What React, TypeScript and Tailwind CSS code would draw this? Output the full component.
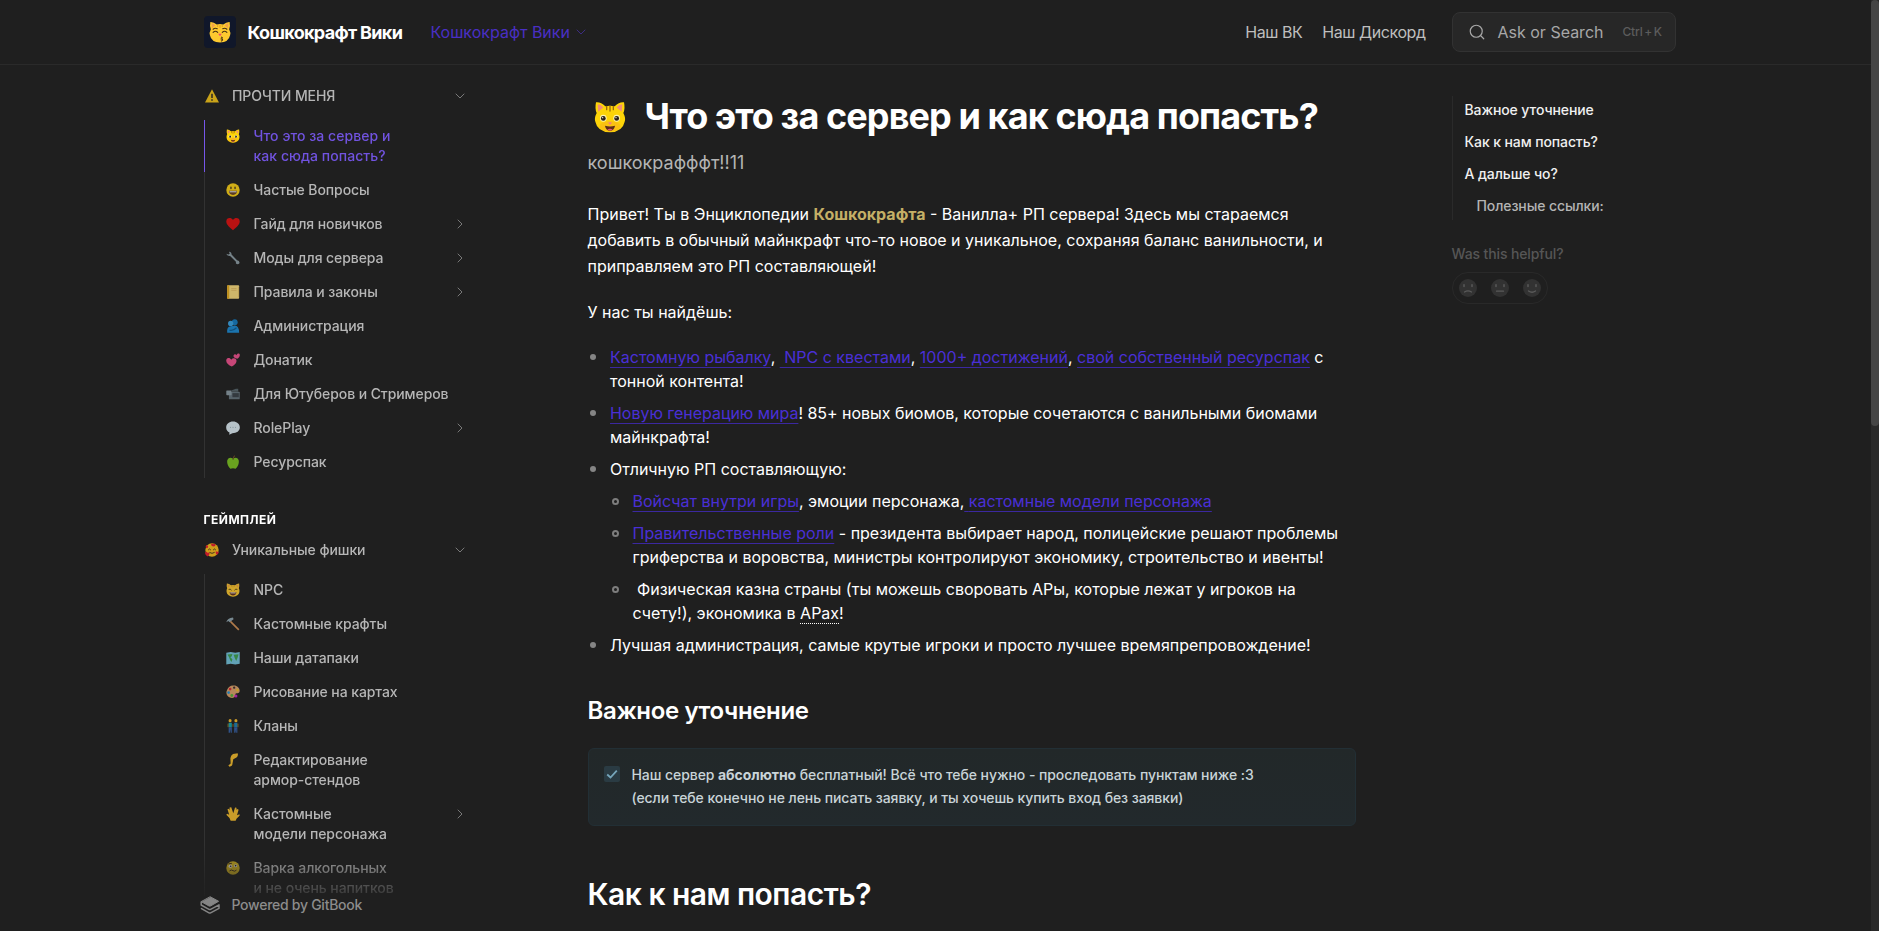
import React from "react";
import { ChevronDown, ChevronRight, Search } from "lucide-react";

type Glyph = React.ReactNode;

const catHead = (
  <>
    <path d="M1.500 1 Q5 0.800 8.500 3.800 Q12 3 15.500 3.800 Q19 0.800 22.500 1 Q23.500 6 22 9 Q24 13 23 15.500 Q21.500 23 12 23.500 Q2.500 23 1 15.500 Q0 13 2 9 Q0.500 6 1.500 1Z" fill="#fdc92f" />
    <path d="M2.800 2.500 Q5 2.500 7 4.800 L3.200 8Z M21.200 2.500 Q19 2.500 17 4.800 L20.800 8Z" fill="#f0a24a" />
    <path d="M12 4V7.500 M9.500 4.500V6.500 M14.500 4.500V6.500" stroke="#d99a1c" strokeWidth="1" />
  </>
);

const face = (color: string) => <circle cx="12" cy="12" r="11.500" fill={color} />;

const glyphs: Record<string, Glyph> = {
  warning: (
    <>
      <path d="M12 0.500 L24 23 H0Z" fill="#f5c518" />
      <path d="M12 8v7.500 M12 17.500v2.500" stroke="#2a2a2a" strokeWidth="2.600" />
    </>
  ),
  cat: (
    <>
      <path d="M1.500 1 Q5 0.500 8.500 4 Q12 3 15.500 4 Q19 0.500 22.500 1 Q23.500 6 22 9 Q24 13 23 15.500 Q21.500 23 12 23.500 Q2.500 23 1 15.500 Q0 13 2 9 Q0.500 6 1.500 1Z" fill="#fdd408" />
      <path d="M2.800 2.500 Q5 2.500 7 4.800 L3.200 8Z M21.200 2.500 Q19 2.500 17 4.800 L20.800 8Z" fill="#ef8d78" />
      <path d="M12 3.800V7.500 M9.500 4V6.500 M14.500 4V6.500" stroke="#9b6a10" strokeWidth="1" strokeLinecap="round" />
      <ellipse cx="12" cy="19" rx="8" ry="4" fill="#f5a623" opacity="0.400" />
      <ellipse cx="7" cy="13" rx="2.500" ry="2.600" fill="#fff6b0" />
      <ellipse cx="17" cy="13" rx="2.500" ry="2.600" fill="#fff6b0" />
      <circle cx="7" cy="13.100" r="1.800" fill="#2b2118" />
      <circle cx="17" cy="13.100" r="1.800" fill="#2b2118" />
      <circle cx="6.500" cy="12.500" r="0.500" fill="#fff" />
      <circle cx="16.500" cy="12.500" r="0.500" fill="#fff" />
      <path d="M10.500 16.200h3l-1.500 1.600z" fill="#f0709a" />
      <path d="M8.200 18.600 Q12 19.600 15.800 18.600 Q15 22.300 12 22.300 Q9 22.300 8.200 18.600Z" fill="#5d2c18" />
      <path d="M10 21.400 Q12 20.300 14 21.400 Q12 22.800 10 21.400Z" fill="#e8557a" />
    </>
  ),
  kiss: (
    <>
      {catHead}
      <path d="M4.500 9 Q6.500 7 9 8.500 M15 8.500 Q17.500 7 19.500 9 M4.500 12.500 Q7 9.800 9.500 12.500 M14.500 12.500 Q17 9.800 19.500 12.500" stroke="#4a3413" strokeWidth="1.200" fill="none" strokeLinecap="round" />
      <path d="M10 14h4l-2 2.600z" fill="#ef4b6c" />
      <path d="M13 17.500 q3 0.800 0.500 2 q3 0.800 -0.500 2.500" stroke="#4a3413" strokeWidth="1.200" fill="none" />
    </>
  ),
  grin: (
    <>
      {face("#fcd116")}
      <path d="M8.500 7v2.500 M15.500 7v2.500" stroke="#3b2b20" strokeWidth="2.200" strokeLinecap="round" />
      <path d="M5 13.500 H19 Q19 20.500 12 20.500 Q5 20.500 5 13.500Z" fill="#6b4326" />
      <path d="M6 14h12v2h-12z" fill="#d8d8d8" />
    </>
  ),
  heart: (
    <path d="M12 22.500 C7 18 0.500 13.500 0.500 7.500 C0.500 1 8.500 0 12 5 C15.500 0 23.500 1 23.500 7.500 C23.500 13.500 17 18 12 22.500Z" fill="#e00f0f" />
  ),
  wrench: (
    <path d="M0.500 4.500 L4 6 L6.500 4.500 L5 1.200 Q9.500 1 9.500 6 L19 16 Q24 16.500 23 21 Q20.500 24.500 17 21.500 L17 18.500 L7 8.500 Q2 9 0.500 4.500Z" fill="#8b9ba3" />
  ),
  ledger: (
    <>
      <rect x="2" y="0.500" width="20.500" height="23" rx="1.500" fill="#fbdc7e" />
      <rect x="2" y="0.500" width="3.500" height="23" fill="#e8ac1a" />
      <path d="M9 6h9 M9 9h9 M21.500 3v18" stroke="#dcb55a" strokeWidth="1.200" />
    </>
  ),
  hug: (
    <>
      <circle cx="15" cy="5.500" r="5" fill="#137bc0" />
      <circle cx="8" cy="7.500" r="4.500" fill="#3aa3e3" />
      <path d="M2 23.500 Q1 13 8 12.500 L15 11 Q22.500 11.500 22.500 23.500Z" fill="#1b8ad3" />
      <path d="M6 19 Q12 21 18 15" stroke="#0e5e96" strokeWidth="2" fill="none" />
    </>
  ),
  hearts: (
    <>
      <path d="M10 23 C4 21 -0.500 17 0.500 12 C1.500 7.500 7 7.500 9 11.500 C12 7.500 18.500 8.500 18 14 C17.500 18 14 21 10 23Z" fill="#f0508e" />
      <path d="M19.500 10 C15 9 12 7 13 4 C14 1.500 17 1.500 18 4 C19 0.500 23 0 23.700 3 C24 6 22 8.500 19.500 10Z" fill="#f0508e" />
    </>
  ),
  camera: (
    <>
      <rect x="5" y="8" width="18.500" height="13" rx="1" fill="#66757e" />
      <rect x="11" y="10.500" width="11" height="7" fill="#3a4248" />
      <rect x="0.500" y="6" width="9" height="8" rx="1" fill="#8a9aa3" />
      <path d="M9 6 L17 3 H21 V8H9Z" fill="#56636a" />
    </>
  ),
  speech: (
    <>
      <path d="M12 1 C18.500 1 23.700 5.500 23.700 11 C23.700 17 18 20.800 11 20.800 L5.500 23.700 L6 19.500 C2.500 18 0.300 15 0.300 11 C0.300 5.500 5.500 1 12 1Z" fill="#dcebf3" />
      <path d="M7 11h1.500 M11.300 11h1.500 M15.500 11h1.500" stroke="#8fa3ad" strokeWidth="1.500" />
    </>
  ),
  apple: (
    <>
      <path d="M12 6 Q20 2.500 22 10 Q22.500 18 16.500 23.500 Q12 22.300 7.500 23.500 Q1.500 18 2 10 Q4 2.500 12 6Z" fill="#7cc520" />
      <path d="M12 8 Q12 4 15 1" stroke="#704b25" strokeWidth="2" fill="none" />
    </>
  ),
  love: (
    <>
      {face("#fcbf1b")}
      <path d="M5.500 12 Q7.500 8.500 10 12 M14 12 Q16.500 8.500 18.500 12 M7.500 16 Q12 19.500 16.500 16" stroke="#423020" strokeWidth="1.600" fill="none" />
      <path d="M15 6 Q9 5 11 1 Q13 0 14 2 Q17 0 18 3 Q18 5.500 15 6Z M4.500 23 Q-1 20 0.500 16 Q3 14 4.500 17 Q7.500 15 8 18 Q7.500 21 4.500 23Z M20.500 20 Q17.500 18 18.500 14.500 Q20 13.500 20.500 15.500 Q23 13 23.500 16 Q23 19 20.500 20Z M3 9 Q0 7 2 4 Q5 4 5.500 6 Q5 8.500 3 9Z" fill="#ed1c2e" />
    </>
  ),
  catGrin: (
    <>
      {catHead}
      <path d="M4.500 11 Q7.500 9.500 9.500 12.500 M14.500 12.500 Q16.500 9.500 19.500 11" stroke="#4a3413" strokeWidth="1.500" fill="none" />
      <path d="M6 16 H18 Q17 21.500 12 21.500 Q7 21.500 6 16Z" fill="#65331c" />
      <path d="M7.500 16.300h9v1.400h-9z" fill="#fff" />
    </>
  ),
  pick: (
    <>
      <path d="M8 6 L23 21 L21 23 L6.500 8.500Z" fill="#d39055" />
      <path d="M0.500 9 Q2 2 12 0.800 L13 3.800 L6 9 L4 7Z" fill="#8fa4ae" />
    </>
  ),
  map: (
    <>
      <path d="M0.500 3 L8 1.500 L16 3 L23.500 1.500 V22 L16 23 L8 22 L0.500 23Z" fill="#74c4dc" />
      <path d="M2.500 6 L11 5 L10 9 L7.500 10.500 L11 14 L9.500 19 L7 15.500 L5.500 11Z M13 6.500 L21.500 5.500 L20 11 L17.500 17 L15 12Z" fill="#3da24f" />
    </>
  ),
  palette: (
    <>
      <path d="M12 1 C20 0 25 7 23 12 C21 16 16 12 16 17 C16 21 12 23 8 22 C1 20 -1 13 2 8 C4 4 7 1 12 1Z" fill="#dba269" />
      <circle cx="7" cy="7" r="2.300" fill="#dd2935" />
      <circle cx="14" cy="4.500" r="2" fill="#3c2c2c" />
      <circle cx="4.500" cy="13" r="2.300" fill="#2195df" />
      <circle cx="10" cy="18" r="2.400" fill="#57b53d" />
      <circle cx="19.500" cy="9" r="2" fill="#f3c21b" />
      <circle cx="17" cy="19" r="2.600" fill="#c41ec4" />
    </>
  ),
  people: (
    <>
      <circle cx="7" cy="2.800" r="2.600" fill="#f5b92b" />
      <circle cx="17" cy="2.800" r="2.600" fill="#f5b92b" />
      <path d="M4.500 6.500h5.500v7.500H4.500z" fill="#16a5ab" />
      <path d="M14 6.500h5.500v7.500H14z" fill="#1c7fb2" />
      <path d="M4.500 14h5.500v9.500H8v-7l-1.300 7H4.500z M14 14h5.500v9.500h-2v-7l-1.300 7H14z" fill="#355fa3" />
      <path d="M3.500 8v6 M12 8.500v5 M20.500 8v6" stroke="#e2a325" strokeWidth="1" />
    </>
  ),
  leg: (
    <path d="M12 1.500 L20 0.500 Q21.500 5 18 7.500 L12.500 10.500 L11 19 Q11 23 6 23.500 L4 21.500 L8 18 L7.500 9 Q8 4 12 1.500Z" fill="#f6bd2c" />
  ),
  vulcan: (
    <path d="M8 23.500 L6 19 L0.500 13.500 L2 11.500 L5.500 13.500 L2.500 4 L4.800 3 L6 5.500 L6.200 0.800 L9 0.500 L12.500 10.500 L15.500 0.800 L18 1.300 L18 4.500 L19.800 3.500 L21.600 4.500 L18.800 14 L23 12.500 L23.500 14.500 L18 20 L16.500 23.500Z" fill="#f6bd2c" />
  ),
  woozy: (
    <>
      {face("#f3cf24")}
      <circle cx="7.500" cy="9" r="3" fill="#fff" />
      <circle cx="16.500" cy="8" r="2.600" fill="#fff" />
      <circle cx="8" cy="9" r="1.400" fill="#35281c" />
      <circle cx="16.500" cy="8" r="1.400" fill="#35281c" />
      <path d="M4 5 L10 4 M6 17 Q9 14 12 16.500 Q15 19 18 15.500" stroke="#4a3420" strokeWidth="1.700" fill="none" />
    </>
  ),
};

function Emoji({ name, className }: { name: string; className: string }) {
  return (
    <svg viewBox="0 0 24 24" className={className} aria-hidden="true">
      {glyphs[name]}
    </svg>
  );
}

interface Item {
  icon: string;
  lines: string[];
  active?: boolean;
  nested?: boolean;
}

const firstGroup: Item[] = [
  { icon: "cat", lines: ["Что это за сервер и", "как сюда попасть?"], active: true },
  { icon: "grin", lines: ["Частые Вопросы"] },
  { icon: "heart", lines: ["Гайд для новичков"], nested: true },
  { icon: "wrench", lines: ["Моды для сервера"], nested: true },
  { icon: "ledger", lines: ["Правила и законы"], nested: true },
  { icon: "hug", lines: ["Администрация"] },
  { icon: "hearts", lines: ["Донатик"] },
  { icon: "camera", lines: ["Для Ютуберов и Стримеров"] },
  { icon: "speech", lines: ["RolePlay"], nested: true },
  { icon: "apple", lines: ["Ресурспак"] },
];

const secondGroup: Item[] = [
  { icon: "catGrin", lines: ["NPC"] },
  { icon: "pick", lines: ["Кастомные крафты"] },
  { icon: "map", lines: ["Наши датапаки"] },
  { icon: "palette", lines: ["Рисование на картах"] },
  { icon: "people", lines: ["Кланы"] },
  { icon: "leg", lines: ["Редактирование", "армор-стендов"] },
  { icon: "vulcan", lines: ["Кастомные", "модели персонажа"], nested: true },
  { icon: "woozy", lines: ["Варка алкогольных", "и не очень напитков"] },
];

function GroupHeader({ icon, title }: { icon: string; title: string }) {
  return (
    <div className="flex h-8 items-center pr-[15.5px] text-[#b6b6b6]">
      <Emoji name={icon} className="ml-[1.5px] size-3.5 opacity-80" />
      <span className="ml-[13px] grow">{title}</span>
      <ChevronDown className="size-4 text-[#808080]" strokeWidth={1.4} />
    </div>
  );
}

function ItemList({ items }: { items: Item[] }) {
  return (
    <ul className="flex flex-col gap-0.5 border-l border-[#323232]">
      {items.map((item) => (
        <li
          key={item.lines[0]}
          className={
            item.active
              ? "-ml-px flex border-l border-[#7656ea] py-1.5 pr-[15.5px] pl-[21.5px] tracking-[0.05px] text-[#7153e0]"
              : "flex py-1.5 pr-[15.5px] pl-[21.5px] text-[#b6b6b6]"
          }
        >
          <Emoji name={item.icon} className={item.active ? "mt-[3px] size-3.5" : "mt-[3px] size-3.5 opacity-80"} />
          <span className="ml-[13.5px] grow whitespace-nowrap">
            {item.lines.map((line) => (
              <span key={line} className="block">
                {line}
              </span>
            ))}
          </span>
          {item.nested && <ChevronRight className="mt-0.5 size-4 text-[#808080]" strokeWidth={1.4} />}
        </li>
      ))}
    </ul>
  );
}

function GitBookMark() {
  return (
    <svg viewBox="0 0 20 18" className="h-[18px] w-5 text-[#858585]" fill="none" stroke="currentColor" strokeLinejoin="round" strokeLinecap="round">
      <path d="M10.500 0.900 L18.600 5.300 L10.500 10 Q9.800 10.300 9 10 L1.500 5.800 Z" fill="currentColor" strokeWidth="1" />
      <path d="M1.200 6v3 L9 13.300 Q9.800 13.700 10.600 13.300 L19 8.800 V12.300 L10.600 16.800 Q9.800 17.200 9 16.800 L1.500 12.600" strokeWidth="1.500" />
    </svg>
  );
}

function Link({ children }: { children: React.ReactNode }) {
  return (
    <a className="text-[#4a2fd6] underline decoration-[#3b28a0] decoration-1 underline-offset-4">{children}</a>
  );
}

function Bullet({ children }: { children: React.ReactNode }) {
  return (
    <li className="flex">
      <span className="mt-[9px] mr-[14.5px] ml-0.5 size-1.5 shrink-0 rounded-full bg-[#858585]" />
      <div className="grow">{children}</div>
    </li>
  );
}

function SubBullet({ children }: { children: React.ReactNode }) {
  return (
    <li className="flex">
      <span className="mt-[8.5px] mr-[13.5px] ml-0.5 size-[7px] shrink-0 rounded-full border-2 border-[#7d7d7d]" />
      <div className="grow">{children}</div>
    </li>
  );
}

function Mood({ mouth }: { mouth: string }) {
  return (
    <svg viewBox="0 0 18 18" className="size-[18px]">
      <circle cx="9" cy="9" r="9" fill="#323232" />
      <path d="M5 5.800v1.700 M13 5.800v1.700" stroke="#5a5a5a" strokeWidth="1.500" strokeLinecap="round" />
      <path d={mouth} stroke="#5a5a5a" strokeWidth="1.300" strokeLinecap="round" fill="none" />
    </svg>
  );
}

export default function App() {
  return (
    <div className="flex h-[931px] w-full overflow-hidden bg-[#1f1f1f] font-['Inter',sans-serif] text-white">
      <div className="flex grow flex-col">
        <header className="h-[65px] shrink-0 border-b border-[#2a2a2a]">
          <div className="ml-[203.5px] flex h-16 w-[1472.5px] items-center">
            <div className="flex size-8 items-center justify-center rounded bg-[#10172a]">
              <Emoji name="kiss" className="size-[22px]" />
            </div>
            <span className="ml-3 w-[183px] text-[18px] font-bold tracking-[-0.67px] whitespace-nowrap">Кошкокрафт Вики</span>
            <span className="text-[16px] text-[#4a2fc4]">Кошкокрафт Вики</span>
            <ChevronDown className="ml-[3px] size-4 text-[#44309c]" strokeWidth={1.2} />
            <nav className="ml-auto flex gap-5 pr-[26.5px] text-[16px] tracking-[-0.44px] text-[#bebebe]">
              <span>Наш ВК</span>
              <span>Наш Дискорд</span>
            </nav>
            <div className="flex h-10 w-56 items-center rounded-lg border border-[#323232] bg-[#272727] pr-[13px] pl-[14.5px] text-[#a8a8a8]">
              <Search className="size-[18px]" strokeWidth={1.6} />
              <span className="ml-3 grow text-[16px]">Ask or Search</span>
              <span className="text-[12px] font-medium tracking-[-0.1px] text-[#5c5c5c] [word-spacing:-1.5px]">Ctrl + K</span>
            </div>
          </div>
        </header>

        <div className="mx-auto flex w-[1472px] grow">
          <aside className="flex h-[866px] w-[284px] shrink-0 flex-col text-[14px] leading-5 font-medium tracking-[-0.08px]">
            <div className="h-[831px] overflow-hidden pt-[15px] pl-1 [mask-image:linear-gradient(to_bottom,black_780px,transparent_840px)]">
              <GroupHeader icon="warning" title="ПРОЧТИ МЕНЯ" />
              <div className="pt-2">
                <ItemList items={firstGroup} />
              </div>
              <h4 className="pt-8 text-[12px] leading-[19px] font-bold tracking-[0.5px] text-white">ГЕЙМПЛЕЙ</h4>
              <div className="pt-[5px]">
                <GroupHeader icon="love" title="Уникальные фишки" />
              </div>
              <div className="pt-2">
                <ItemList items={secondGroup} />
              </div>
            </div>
            <div className="flex h-[18px] items-center tracking-[-0.27px] text-[#8c8c8c]">
              <GitBookMark />
              <span className="ml-3">Powered by GitBook</span>
            </div>
          </aside>

          <main className="ml-[104px] w-[768px] shrink-0 text-[16px] leading-6">
            <h1 className="flex items-center pt-[29px] text-[36px] leading-[45px] font-bold tracking-[-0.9px] whitespace-nowrap">
              <Emoji name="cat" className="mr-[19px] ml-1.5 size-8" />
              Что это за сервер и как сюда попасть?
            </h1>
            <p className="pt-2.5 text-[18px] leading-7 text-[#b4b4b4]">кошкокрафффт!!11</p>
            <p className="pt-6 leading-[26px]">
              Привет! Ты в Энциклопедии <b className="text-[#c4af66]">Кошкокрафта</b> - Ванилла+ РП сервера! Здесь мы стараемся
              <br />
              добавить в обычный майнкрафт что-то новое и уникальное, сохраняя баланс ванильности, и
              <br />
              приправляем это РП составляющей!
            </p>
            <p className="pt-5 leading-[26px]">У нас ты найдёшь:</p>
            <ul className="flex flex-col gap-2 pt-5 whitespace-nowrap">
              <Bullet>
                <Link>Кастомную рыбалку</Link>, <Link>&nbsp;NPC с квестами</Link>, <Link>1000+ достижений</Link>,{" "}
                <Link>свой собственный ресурспак</Link> с
                <br />
                тонной контента!
              </Bullet>
              <Bullet>
                <span className="tracking-[-0.03px]">
                  <Link>Новую генерацию мира</Link>! 85+ новых биомов, которые сочетаются с ванильными биомами
                </span>
                <br />
                майнкрафта!
              </Bullet>
              <Bullet>
                Отличную РП составляющую:
                <ul className="flex flex-col gap-2 pt-2">
                  <SubBullet>
                    <Link>Войсчат внутри игры</Link>, эмоции персонажа,<Link>{" "}кастомные модели персонажа</Link>
                  </SubBullet>
                  <SubBullet>
                    <Link>Правительственные роли</Link> - президента выбирает народ, полицейские решают проблемы
                    <br />
                    гриферства и воровства, министры контролируют экономику, строительство и ивенты!
                  </SubBullet>
                  <SubBullet>
                    &nbsp;Физическая казна страны (ты можешь своровать АРы, которые лежат у игроков на
                    <br />
                    счету!), экономика в <span className="underline decoration-dotted decoration-1 underline-offset-4">АРах</span>!
                  </SubBullet>
                </ul>
              </Bullet>
              <Bullet>Лучшая администрация, самые крутые игроки и просто лучшее времяпрепровождение!</Bullet>
            </ul>
            <h3 className="pt-[38px] text-[24px] leading-8 font-semibold tracking-[-0.36px]">Важное уточнение</h3>
            <div className="mt-[21px] flex h-[78px] rounded-md border border-[#222f35] bg-linear-to-b from-[#222829] to-[#22292c] pt-3.5 pl-[15px]">
              <span className="mt-[3px] flex size-4 items-center justify-center rounded-xs bg-[#2a3b43]">
                <svg viewBox="0 0 12 12" className="size-3" fill="none" stroke="#76a6bb" strokeWidth="1.800">
                  <path d="M1.200 6.500 L4.500 9.500 L10.800 2.700" />
                </svg>
              </span>
              <p className="ml-3 text-[14px] leading-[23px] font-medium tracking-[-0.07px] whitespace-nowrap text-[#c9d4d8]">
                Наш сервер <b>абсолютно</b> бесплатный! Всё что тебе нужно - проследовать пунктам ниже :3
                <br />
                (если тебе конечно не лень писать заявку, и ты хочешь купить вход без заявки)
              </p>
            </div>
            <h2 className="pt-[50px] text-[30px] leading-9 font-semibold tracking-[-0.52px]">Как к нам попасть?</h2>
          </main>

          <aside className="ml-24 w-56 pt-[31px] text-[14px] leading-5">
            <ul className="flex h-[124px] flex-col gap-3 border-l border-[#2a2a2a] pt-1 pl-3 font-medium tracking-[-0.1px] text-[#f0f0f0]">
              <li>Важное уточнение</li>
              <li>Как к нам попасть?</li>
              <li>А дальше чо?</li>
              <li className="pl-3 text-[#b4b4b4]">Полезные ссылки:</li>
            </ul>
            <p className="pt-6 font-medium tracking-[-0.12px] text-[#565656]">Was this helpful?</p>
            <div className="mt-2 flex h-8 w-24 items-center justify-between rounded-full border border-[#292929] px-1.5">
              <Mood mouth="M5.500 13 Q9 10.600 12.500 13" />
              <Mood mouth="M5.500 12.200 H12.500" />
              <Mood mouth="M5.500 12 Q9 14.500 12.500 12" />
            </div>
          </aside>
        </div>
      </div>
      <div className="w-2 shrink-0 bg-[#292929]">
        <div className="h-[426px] rounded-full bg-[#454545]" />
      </div>
    </div>
  );
}
